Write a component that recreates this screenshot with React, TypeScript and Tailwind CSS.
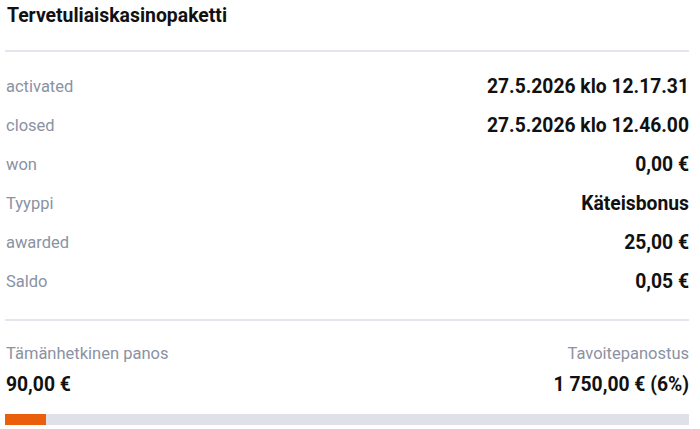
import React from 'react';

const rows: { label: string; value: string }[] = [
  { label: 'activated', value: '27.5.2026 klo 12.17.31' },
  { label: 'closed', value: '27.5.2026 klo 12.46.00' },
  { label: 'won', value: '0,00 €' },
  { label: 'Tyyppi', value: 'Käteisbonus' },
  { label: 'awarded', value: '25,00 €' },
  { label: 'Saldo', value: '0,05 €' },
];

export default function App() {
  const current = 90;
  const target = 1750;
  const pct = Math.ceil((current / target) * 100);

  return (
    <div className="min-h-screen bg-white pl-[5px] pr-[11px] font-['Roboto',sans-serif] text-[#111]">
      <div className="flex h-[32px] items-center pl-[2px] text-[19.4px] font-bold">
        Tervetuliaiskasinopaketti
      </div>
      <div className="mt-[18px] border-t-2 border-[#e4e6ee]" />

      <div className="mt-[16px] flex flex-col">
        {rows.map((r) => (
          <div key={r.label} className="flex h-[39px] items-center justify-between pl-[1px]">
            <span className="text-[16.5px] text-[#8a92a3]">{r.label}</span>
            <span className="text-[19.3px] font-bold">{r.value}</span>
          </div>
        ))}
      </div>

      <div className="mt-[17px] border-t-2 border-[#e4e6ee]" />

      <div className="mt-[22px] flex justify-between pl-[1px]">
        <div className="flex flex-col gap-[8px]">
          <span className="flex h-[22px] items-center text-[16.5px] text-[#8a92a3]">Tämänhetkinen panos</span>
          <span className="flex h-[24px] items-center text-[19.3px] font-bold">90,00 €</span>
        </div>
        <div className="flex flex-col items-end gap-[8px]">
          <span className="flex h-[22px] items-center text-[16.5px] text-[#8a92a3]">Tavoitepanostus</span>
          <span className="flex h-[24px] items-center text-[19.3px] font-bold">1 750,00 € ({pct}%)</span>
        </div>
      </div>

      <div className="mt-[17px] h-[11px] w-full bg-[#dfe1e8]">
        <div className="h-full bg-[#ea5f0c]" style={{ width: `${pct}%` }} />
      </div>
    </div>
  );
}
